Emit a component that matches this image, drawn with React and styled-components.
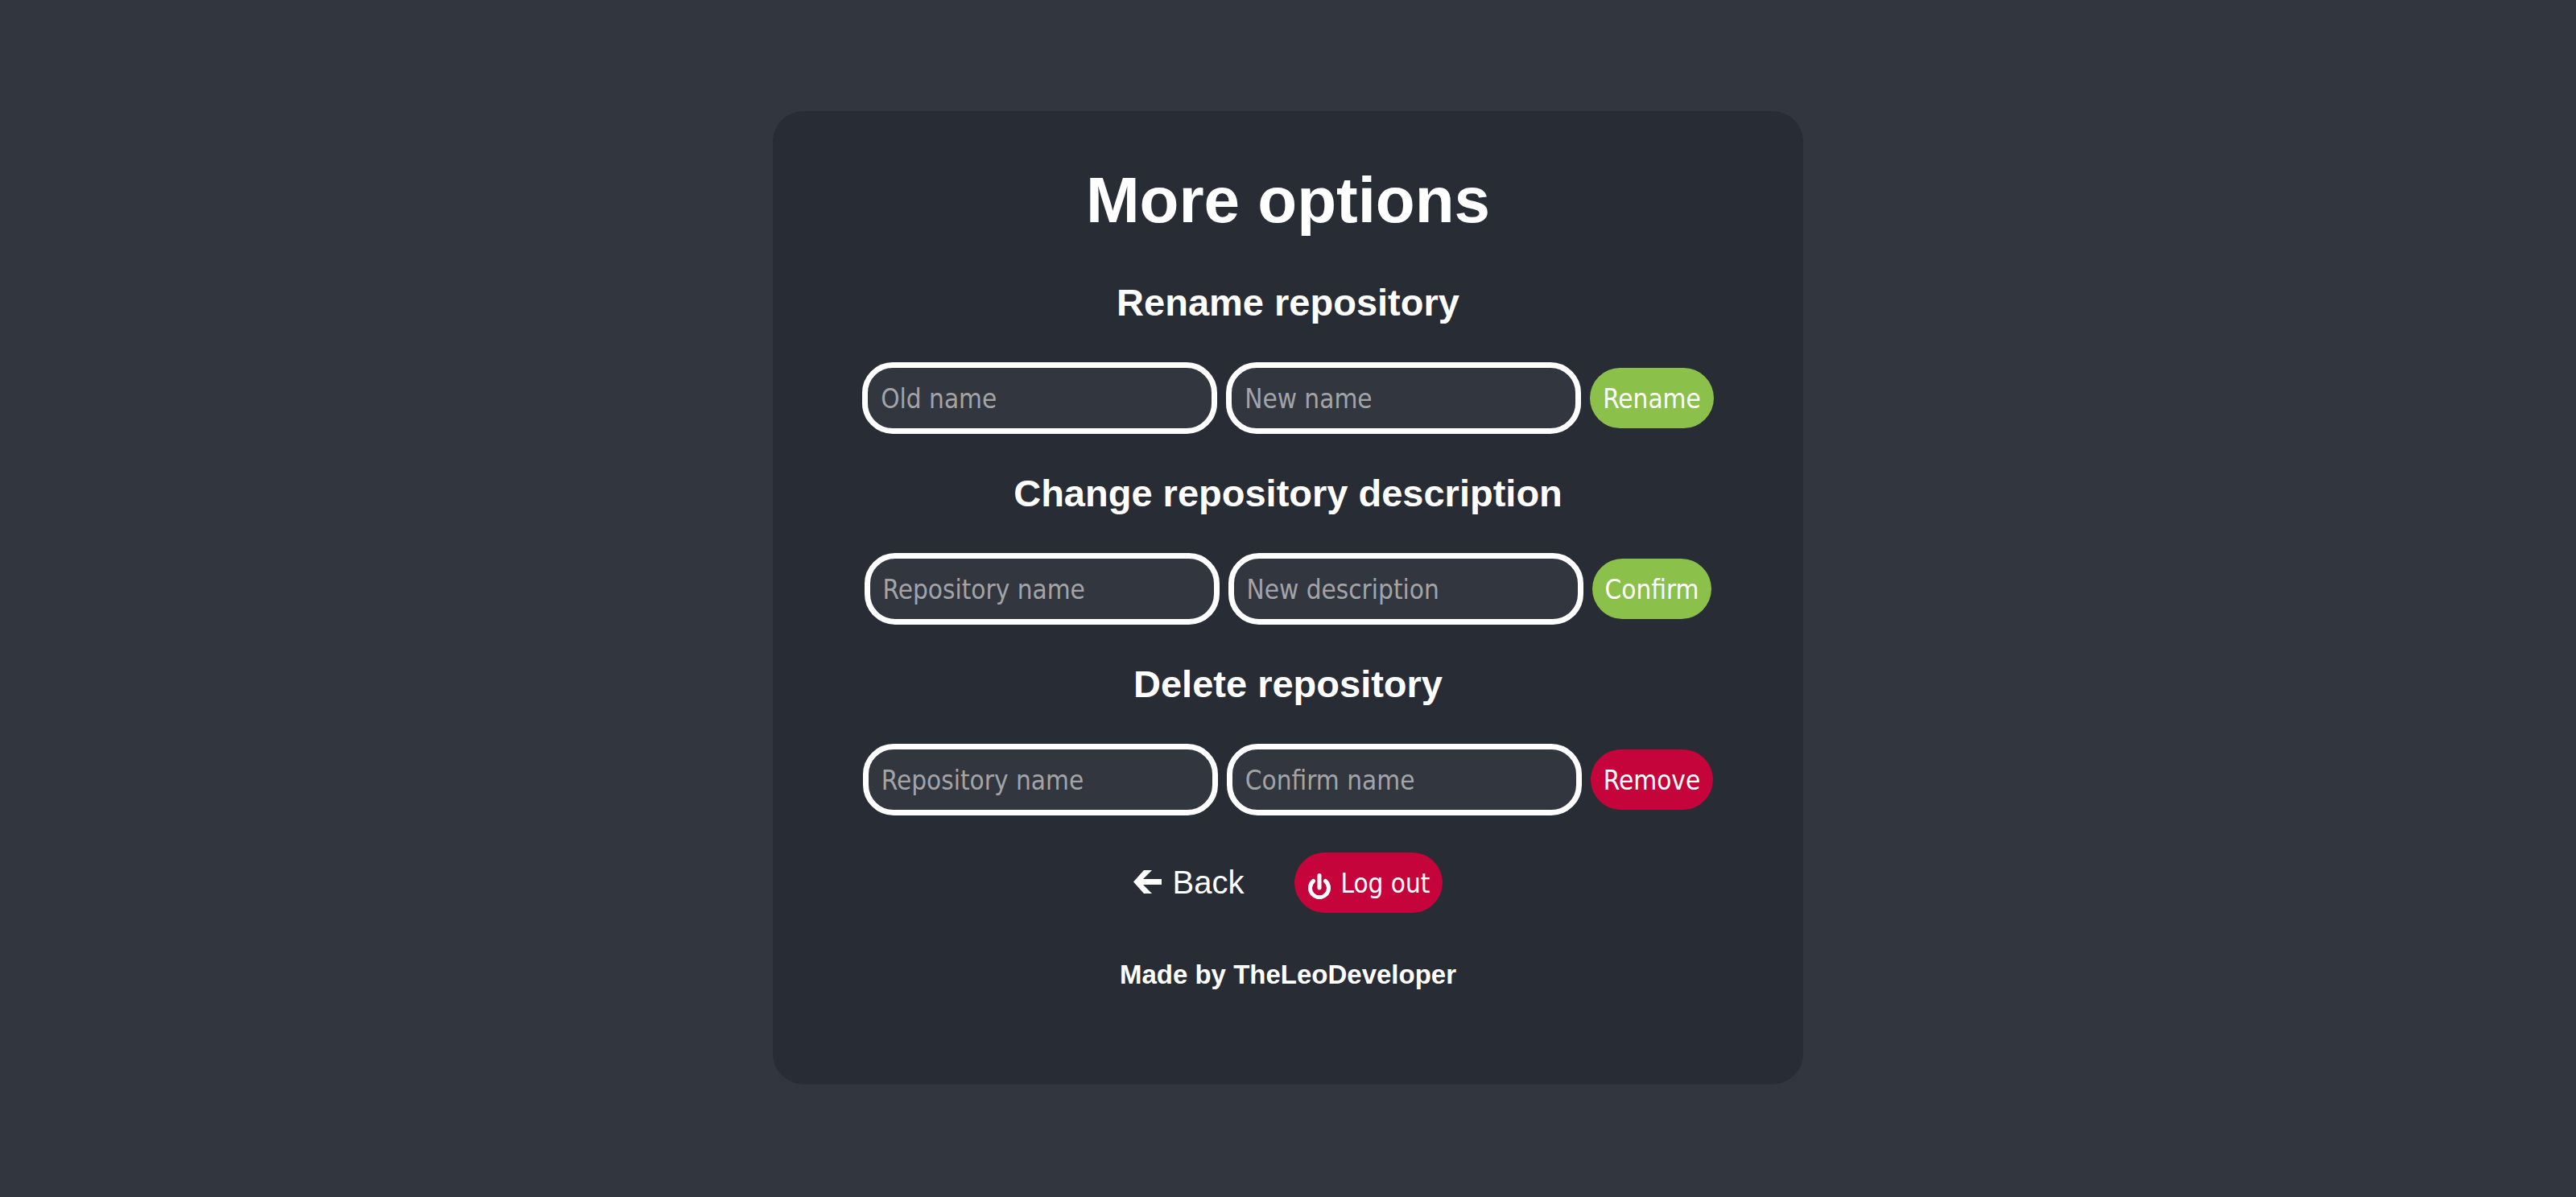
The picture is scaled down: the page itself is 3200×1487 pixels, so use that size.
import React from "react";
import styled, { createGlobalStyle } from "styled-components";

const GlobalStyle = createGlobalStyle`
  *, *::before, *::after { box-sizing: border-box; }
  body {
    margin: 0;
    background: #32363f;
    color: #fff;
    font-family: "Liberation Sans", Arial, sans-serif;
    font-size: 40px;
  }
`;

const Page = styled.div`
  min-height: 100vh;
  display: flex;
  align-items: center;
  justify-content: center;
  padding-bottom: 2px;
`;

const Card = styled.main`
  width: 40%;
  min-width: 1100px;
  display: flex;
  flex-direction: column;
  align-items: center;
  padding: 65px 12px 117px;
  border-radius: 38px;
  background: #282c35;
`;

const Title = styled.h1`
  margin: 0 0 53px;
  font-size: 80px;
  line-height: 92px;
`;

const Section = styled.form`
  display: flex;
  flex-direction: column;
  align-items: center;
  margin-bottom: 46px;
`;

const SectionTitle = styled.h2`
  margin: 0 0 47px;
  font-size: 47px;
  line-height: 55px;
`;

const Row = styled.div`
  display: flex;
  align-items: center;
  gap: 11px;
`;

const Field = styled.input`
  width: 441px;
  height: 89px;
  padding: 2px 16px 0;
  border: 7px solid #fff;
  border-radius: 38px;
  background: #32363f;
  color: #fff;
  font-family: "DejaVu Sans Condensed", "Noto Sans", sans-serif;
  font-size: 33px;
  outline: none;

  &::placeholder {
    color: #a3a4a8;
    opacity: 1;
  }
`;

const Button = styled.button`
  display: flex;
  align-items: center;
  gap: 11px;
  height: 75px;
  padding: 2px 16px 0;
  border: 0;
  border-radius: 38px;
  background: ${({ $danger }) => ($danger ? "#c5043b" : "#8bc04b")};
  color: #fff;
  font-family: "DejaVu Sans Condensed", "Noto Sans", sans-serif;
  font-size: 33px;
  cursor: pointer;
`;

const Actions = styled.nav`
  display: flex;
  align-items: center;
  gap: 63px;
  margin-bottom: 58px;
`;

const BackLink = styled.a`
  display: flex;
  align-items: center;
  gap: 14px;
  padding-bottom: 2px;
  color: #fff;
  text-decoration: none;
  line-height: 46px;
`;

const Credit = styled.h5`
  margin: 0;
  font-size: 33px;
  line-height: 38px;
`;

const sections = [
  { title: "Rename repository", fields: ["Old name", "New name"], action: "Rename" },
  { title: "Change repository description", fields: ["Repository name", "New description"], action: "Confirm" },
  { title: "Delete repository", fields: ["Repository name", "Confirm name"], action: "Remove", danger: true },
];

const ArrowIcon = () => (
  <svg width="35" height="30" viewBox="0 0 35 30" fill="#fff" aria-hidden="true">
    <path d="M0 14.500 13 0h10L12 11h23v7H12l11 11H13z" />
  </svg>
);

const PowerIcon = () => (
  <svg width="30" height="38" viewBox="-1 -6 30 38" fill="none" stroke="#fff" strokeWidth="5" strokeLinecap="round" aria-hidden="true">
    <path d="M14 2.500V18M6.500 9.500a11.500 11.500 0 1 0 15 0" />
  </svg>
);

export default function App() {
  return (
    <>
      <GlobalStyle />
      <Page>
        <Card>
          <Title>More options</Title>
          {sections.map(({ title, fields, action, danger }) => (
            <Section key={title} onSubmit={(e) => e.preventDefault()}>
              <SectionTitle>{title}</SectionTitle>
              <Row>
                {fields.map((name) => (
                  <Field key={name} type="text" placeholder={name} aria-label={name} />
                ))}
                <Button type="submit" $danger={danger}>{action}</Button>
              </Row>
            </Section>
          ))}
          <Actions>
            <BackLink href="#back">
              <ArrowIcon />
              Back
            </BackLink>
            <Button type="button" $danger>
              <PowerIcon />
              Log out
            </Button>
          </Actions>
          <Credit>Made by TheLeoDeveloper</Credit>
        </Card>
      </Page>
    </>
  );
}
